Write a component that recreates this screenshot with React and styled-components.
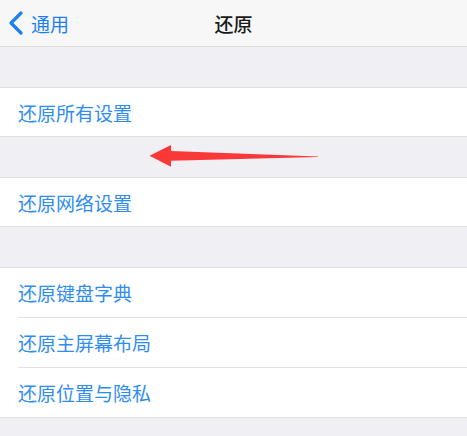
import React from "react";
import styled, { createGlobalStyle } from "styled-components";

const Global = createGlobalStyle`
  html, body { margin: 0; padding: 0; background: #efeff4; }
  body { font-family: "Noto Sans CJK SC", "Noto Sans", sans-serif; }
`;

const Page = styled.div`
  position: relative;
  width: 467px;
  height: 436px;
  overflow: hidden;
  background: #efeff4;
`;

const NavBar = styled.div`
  height: 46px;
  background: #f7f7f7;
  border-bottom: 1px solid #dcdcdc;
  display: grid;
  grid-template-columns: 1fr auto 1fr;
  align-items: center;
`;

const Back = styled.div`
  display: flex;
  align-items: center;
  gap: 7px;
  padding-left: 8px;
  color: #1e7ff2;
  font-size: 19px;
  line-height: 1;
`;

const Title = styled.div`
  font-size: 19px;
  font-weight: 500;
  color: #1a1a1a;
  line-height: 1;
`;

const Spacer = styled.div`
  height: 40px;
`;

const Group = styled.div`
  background: #fff;
  border-top: 1px solid #e0e0e0;
  border-bottom: 1px solid #e0e0e0;
`;

const Row = styled.div`
  height: ${(p) => p.$h}px;
  display: flex;
  align-items: center;
  padding-left: 18px;
  color: #2f8df2;
  font-size: 19px;
  & + & {
    border-top: 1px solid #e2e2e2;
    margin-left: 18px;
    padding-left: 0;
  }
`;

const Arrow = styled.svg`
  position: absolute;
  left: 0;
  top: 0;
  pointer-events: none;
`;

const groups = [
  { h: 48, items: ["还原所有设置"] },
  { h: 48, items: ["还原网络设置"] },
  { h: 49, items: ["还原键盘字典", "还原主屏幕布局", "还原位置与隐私"] },
];

export default function App() {
  return (
    <Page>
      <Global />
      <NavBar>
        <Back>
          <svg width="16" height="24" viewBox="0 0 16 24">
            <path d="M13 2 L3 12 L13 22" fill="none" stroke="#1e7ff2" strokeWidth="3.2" strokeLinecap="round" strokeLinejoin="round" />
          </svg>
          <span>通用</span>
        </Back>
        <Title>还原</Title>
        <div />
      </NavBar>
      {groups.map((g, i) => (
        <React.Fragment key={i}>
          <Spacer />
          <Group>
            {g.items.map((t) => (
              <Row key={t} $h={g.h}>{t}</Row>
            ))}
          </Group>
        </React.Fragment>
      ))}
      <Arrow width="467" height="436" viewBox="0 0 467 436">
        <polygon
          points="149.5,155.8 171,145 171,151 318,156.6 318,157 171,160.7 171,166.7"
          fill="#fb3838"
        />
      </Arrow>
    </Page>
  );
}
